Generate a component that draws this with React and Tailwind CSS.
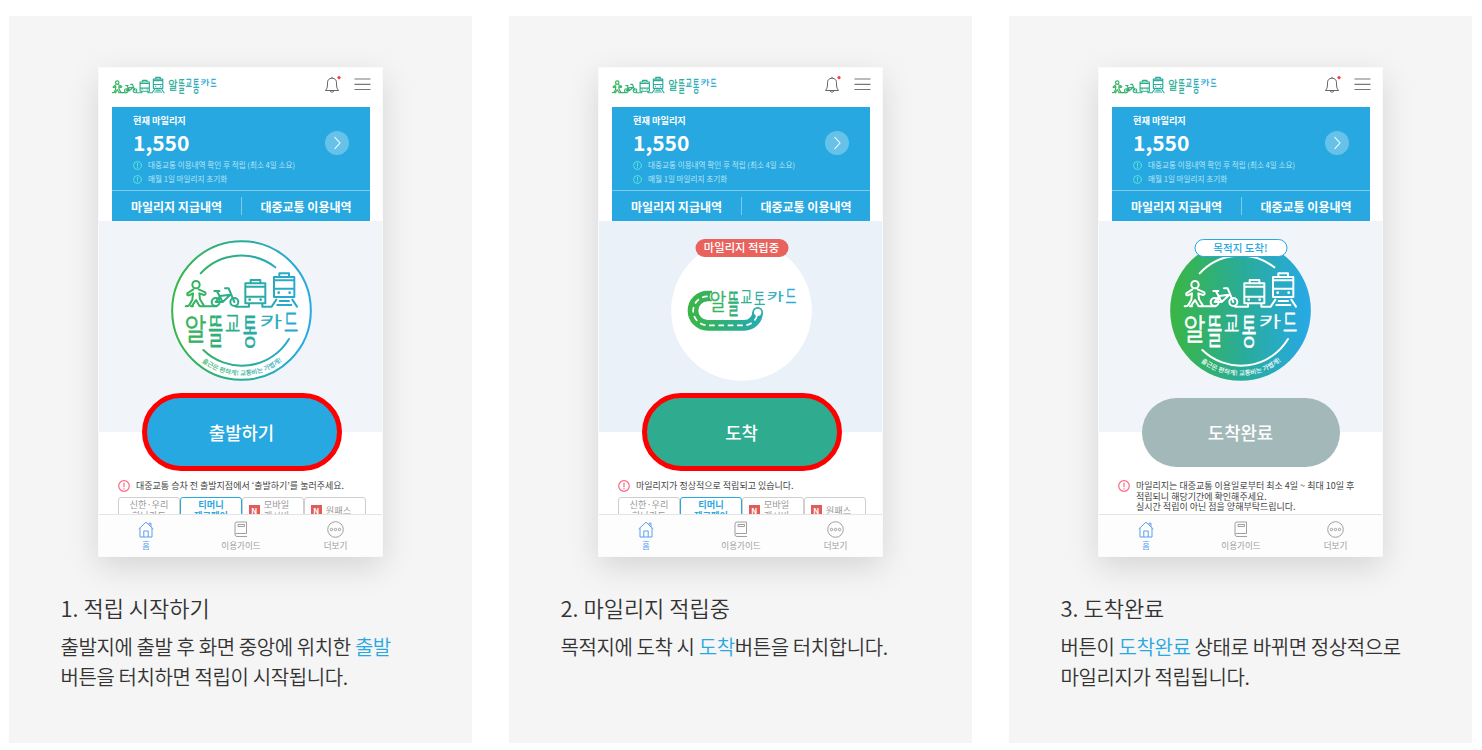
import React from 'react';

const guides = [
  {
    id: 'start',
    title: '1. 적립 시작하기',
    lines: [
      [{ text: '출발지에 출발 후 화면 중앙에 위치한 ' }, { text: '출발', accent: true }],
      [{ text: '버튼을 터치하면 적립이 시작됩니다.' }],
    ],
    stage: 'bg-[#f1f5fa] pl-0.5',
    button: '출발하기',
    buttonClass: 'h-[78px] w-[200px] border-[5px] border-[#ff0000] bg-[#27a8e1]',
    notice: ['대중교통 승차 전 출발지점에서 ‘출발하기’를 눌러주세요.'],
  },
  {
    id: 'progress',
    title: '2. 마일리지 적립중',
    lines: [
      [{ text: '목적지에 도착 시 ' }, { text: '도착', accent: true }, { text: '버튼을 터치합니다.' }],
    ],
    stage: 'bg-[#ebf1f8] pl-0.5',
    badge: '마일리지 적립중',
    badgeClass: 'bg-[#e9635e] text-[11.3px] text-white',
    button: '도착',
    buttonClass: 'h-[78px] w-[200px] border-[5px] border-[#ff0000] bg-[#2fac90]',
    notice: ['마일리지가 정상적으로 적립되고 있습니다.'],
  },
  {
    id: 'done',
    title: '3. 도착완료',
    lines: [
      [{ text: '버튼이 ' }, { text: '도착완료', accent: true }, { text: ' 상태로 바뀌면 정상적으로' }],
      [{ text: '마일리지가 적립됩니다.' }],
    ],
    stage: 'bg-[#f1f5fa]',
    badge: '목적지 도착!',
    badgeClass: 'border border-[#27a8e1] bg-white text-[10.5px] text-[#27a8e1]',
    button: '도착완료',
    buttonClass: 'my-[5px] h-[69px] w-[198px] bg-[#a3b8b8]',
    notice: [
      '마일리지는 대중교통 이용일로부터 최소 4일 ~ 최대 10일 후',
      '적립되니 해당기간에 확인해주세요.',
      '실시간 적립이 아닌 점을 양해부탁드립니다.',
    ],
  },
];

const tabs = [
  { top: '신한·우리', bottom: '하나카드' },
  { top: '티머니', bottom: '제로페이', active: true },
  { top: '모바일', bottom: '캐시비', isNew: true },
  { top: '원패스', isNew: true },
];

// target box of every letter: x, y, width, height
const letters = [
  ['알', 286, 286, 60, 81],
  ['뜰', 357, 283, 41, 100],
  ['교', 407, 277, 42, 64],
  ['통', 460, 283, 40, 100],
  ['카', 512, 284, 61, 42],
  ['드', 584, 274, 39, 68],
];

const Gradient = ({ id, x1 = 243, x2 = 666 }) => (
  <defs>
    <linearGradient id={id} gradientUnits="userSpaceOnUse" x1={x1} y1="0" x2={x2} y2="0">
      <stop offset="0.05" stopColor="#39b54a" />
      <stop offset="0.5" stopColor="#2aac96" />
      <stop offset="0.95" stopColor="#27a9e1" />
    </linearGradient>
  </defs>
);

const Wordmark = ({ color, short, stroke = 3.2 }) => (
  <g fontFamily="'Noto Sans CJK KR', sans-serif" fontSize="100" fontWeight="300" strokeWidth={stroke} strokeLinejoin="round">
    {letters.map(([char, x, y, w, h]) => {
      const cut = short && char === '통';
      const height = cut ? 62 : h;
      return (
        <svg key={char} x={x} y={y} width={w} height={height} viewBox="4 -84 84 92" preserveAspectRatio="none" overflow="visible">
          <text fill={color(x, w)} stroke={color(x, w)}>{cut ? '토' : char}</text>
        </svg>
      );
    })}
  </g>
);

const mix = (a, b, t) => Math.round(a + (b - a) * t);

// solid colour of a letter, taken from the gradient at its centre
const letterColor = (x, w) => {
  const t = Math.min(1, Math.max(0, (x + w / 2 - 265) / 380));
  return t < 0.5
    ? `rgb(${mix(57, 42, t * 2)}, ${mix(181, 172, t * 2)}, ${mix(74, 150, t * 2)})`
    : `rgb(${mix(42, 39, t * 2 - 1)}, ${mix(172, 169, t * 2 - 1)}, ${mix(150, 225, t * 2 - 1)})`;
};

const Vehicles = ({ stroke, width = 6 }) => (
  <g fill="none" stroke={stroke} strokeWidth={width} strokeLinecap="round" strokeLinejoin="round">
    {/* walker */}
    <circle cx="318" cy="194" r="11" />
    <path d="M310 208L292 220Q290 227 297 226L309 220L307 239L298 255Q296 259 287 259M326 208L346 217Q349 224 342 225L328 220L330 238L341 256M307 256L318 240L328 257M303 259H309M330 259H380" />
    {/* bike */}
    <circle cx="377" cy="246" r="12" />
    <circle cx="433" cy="246" r="12" />
    <path d="M373 213H388M381 214L398 246H377L390 228L421 224L398 246M405 205H416L433 246M390 228L377 246M438 260H477V252" />
    {/* bus */}
    <path d="M466 190H526V250H466ZM482 190V180H511V190M466 200H526M466 230H526M517 252V260H545L559 239" />
    {/* train */}
    <path d="M552 171H613V231H552ZM568 171V160H597V171M552 181H613M552 206H613M569 243H597M562 255H604M607 239L621 260" />
    <g fill={stroke} stroke="none">
      <circle cx="479" cy="239" r="4" />
      <circle cx="512" cy="239" r="4" />
      <circle cx="566" cy="218" r="4" />
      <circle cx="599" cy="218" r="4" />
    </g>
  </g>
);

const Emblem = ({ id, filled }) => {
  const line = filled ? '#fff' : `url(#${id})`;
  return (
    <svg width="141" height="141" viewBox="243 60 423 423">
      <Gradient id={id} />
      <circle cx="454.500" cy="271.500" r={filled ? 211 : 208} fill={filled ? `url(#${id})` : '#fff'} stroke={filled ? 'none' : line} strokeWidth="6" />
      <path d="M332 160A165 165 0 0 1 556 142M340 390A165 165 0 0 0 597 357" fill="none" stroke={line} strokeWidth="6" strokeLinecap="round" />
      <Vehicles stroke={line} />
      <Wordmark color={filled ? () => '#fff' : letterColor} />
      <path id={`${id}-slogan`} d="M290 376A195 195 0 0 0 619 376" fill="none" />
      <text fontFamily="'Noto Sans CJK KR', sans-serif" fontSize="19.500" fontWeight="500" fill={line} textAnchor="middle">
        <textPath href={`#${id}-slogan`} startOffset="50.500%">출근은 편하게! 교통비는 가볍게!</textPath>
      </text>
    </svg>
  );
};

const RoadEmblem = () => (
  <svg width="141" height="141" viewBox="243 60 423 423">
    <Gradient id="road" x1={295} x2={617} />
    <circle cx="454.500" cy="271.500" r="211" fill="#fff" />
    <path d="M366 228H353A44 44 0 0 0 353 316H462A40 40 0 0 0 503 277" fill="none" stroke="url(#road)" strokeWidth="32" />
    <circle cx="503" cy="277" r="16" fill="#2aabad" />
    <path d="M353 229A43 43 0 0 0 353 316H462A40 40 0 0 0 502 283" fill="none" stroke="#fff" strokeWidth="5" strokeDasharray="17 11" />
    <ellipse cx="374" cy="230" rx="15" ry="14" fill="#fff" />
    <circle cx="503" cy="277" r="11" fill="#fff" />
    <g transform="translate(142.600 -3.300) scale(.762)">
      <Wordmark color={letterColor} short />
    </g>
  </svg>
);

const HeaderLogo = () => (
  <svg width="105" height="24" viewBox="0 0 315 72">
    <Gradient id="header-logo" x1={200} x2={900} />
    <g transform="translate(-131.500 -70) scale(.463)">
      <Vehicles stroke="url(#header-logo)" width={7.5} />
    </g>
    <g transform="translate(49 -110) scale(.424)">
      <Wordmark color={(x) => (x < 400 ? '#2fae9b' : x < 500 ? '#2babb5' : '#28a9d8')} stroke={4} />
    </g>
  </svg>
);

const InfoIcon = ({ size, color }) => (
  <svg className="shrink-0" width={size} height={size} viewBox="0 0 12 12" fill="none" stroke={color} strokeWidth="1.200" strokeLinecap="round">
    <circle cx="6" cy="6" r="5.300" />
    <path d="M6 3V6.800M6 8.700V8.900" />
  </svg>
);

const PhoneHeader = () => (
  <div className="flex h-10 items-start pl-3.5 pr-3 pt-[9px]">
    <HeaderLogo />
    <svg className="ml-auto" width="18" height="18" viewBox="0 0 18 18" fill="none" stroke="#666" strokeWidth="1" strokeLinejoin="round">
      <path d="M1.500 14.500H14.500Q12.500 12.500 12.500 9V6.800Q12.500 2.500 8 2.200Q3.500 2.500 3.500 6.800V9Q3.500 12.500 1.500 14.500ZM8 2V.8M6 15Q8 17.800 10 15" />
      <circle cx="15" cy="1.600" r="1.600" fill="#ff3b3b" stroke="none" />
    </svg>
    <svg className="ml-3" width="17" height="16" viewBox="0 0 17 16" stroke="#777" strokeWidth="1.200">
      <path d="M.5 3H16.500M.5 8.300H16.500M.5 13.500H16.500" />
    </svg>
  </div>
);

const MileageCard = () => (
  <div className="ml-3.5 mr-[13px] h-[114px] bg-[#27a8e1] text-white">
    <div className="flex h-[84px] items-start border-b border-[#7ccaec] pl-[21px] pr-[21px] pt-[7px]">
      <div className="grow whitespace-nowrap">
        <div className="text-[9.2px] font-bold leading-[13px]">현재 마일리지</div>
        <div className="text-[21px] font-bold leading-[31px]">1,550</div>
        <div className="flex h-[14px] items-center gap-1.5 text-[7.6px] leading-none text-[#b9e3f5]">
          <InfoIcon size={9} color="#5eeadb" />
          대중교통 이용내역 확인 후 적립 (최소 4일 소요)
        </div>
        <div className="flex h-[14px] items-center gap-1.5 text-[7.6px] leading-none text-[#b9e3f5]">
          <InfoIcon size={9} color="#5eeadb" />
          매월 1일 마일리지 초기화
        </div>
      </div>
      <svg className="-ml-6 mt-[17px] shrink-0" width="24" height="24" viewBox="0 0 24 24">
        <circle cx="12" cy="12" r="12" fill="#67c2ea" />
        <path d="M9.500 6L15 12L9.500 18" fill="none" stroke="#fff" strokeWidth="1.100" />
      </svg>
    </div>
    <div className="flex h-[30px] items-center text-[12px] font-bold leading-none">
      <span className="w-[129px] pt-px text-center">마일리지 지급내역</span>
      <span className="h-[18px] w-px bg-[#7ccaec]" />
      <span className="w-[128px] pt-px text-center">대중교통 이용내역</span>
    </div>
  </div>
);

const CardTabs = () => (
  <div className="mt-[5px] flex w-[248px]">
    {tabs.map((tab) => (
      <div
        key={tab.top}
        className={`flex h-8 w-[62px] items-start justify-center gap-1 whitespace-nowrap rounded-t-[3px] border pt-px text-center text-[9.2px] leading-[11px] ${
          tab.isNew ? 'pr-2' : ''
        } ${tab.active ? 'border-[#27a8e1] font-bold text-[#27a8e1]' : 'border-[#cfcfcf] text-[#999]'}`}
      >
        {tab.isNew && (
          <span className="mt-1.5 h-[11px] w-[11px] bg-[#e25b57] text-[8px] font-bold leading-[11px] text-white">N</span>
        )}
        <span className={tab.bottom ? '' : 'mt-1.5'}>
          {tab.top}
          {tab.bottom && <span className="block">{tab.bottom}</span>}
        </span>
      </div>
    ))}
  </div>
);

const PhoneNav = () => (
  <div className="flex h-[42px] border-t border-[#e4e4e4] bg-[#fdfdfd] text-[8.6px] leading-none text-[#a0a0a0]">
    <div className="flex w-[94px] flex-col items-center gap-[3px] pt-1.5 text-[#5a9df0]">
      <svg width="16" height="17" viewBox="0 0 16 17" fill="none" stroke="currentColor" strokeWidth="1">
        <path d="M.7 8L8 1.200L15.300 8M2 7V16H14V7M11 3.800V2.200H13V5.700M5.800 16V10H10.200V16" />
      </svg>
      홈
    </div>
    <div className="flex w-24 flex-col items-center gap-[3px] pt-1.5">
      <svg width="14" height="17" viewBox="0 0 14 17" fill="none" stroke="currentColor" strokeWidth="1">
        <path d="M12.500 12.500V1H3Q1 1 1 3V13.500Q1 15.500 3 15.500H13M1.500 12.500H12.500M4 3.500H10.500V5.500H4Z" />
      </svg>
      이용가이드
    </div>
    <div className="flex w-[93px] flex-col items-center gap-[3px] pt-1.5">
      <svg width="17" height="17" viewBox="0 0 17 17" fill="none" stroke="currentColor" strokeWidth="1">
        <circle cx="8.500" cy="8.500" r="7.800" />
        <circle cx="4.500" cy="8.500" r="1.200" />
        <circle cx="8.500" cy="8.500" r="1.200" />
        <circle cx="12.500" cy="8.500" r="1.200" />
      </svg>
      더보기
    </div>
  </div>
);

const Phone = ({ guide }) => (
  <div className="flex h-[490px] w-[285px] flex-col border border-[#fafafa] bg-white shadow-[0_10px_30px_rgba(0,0,0,0.13)]">
    <div className="-mt-px h-[447px] shrink-0 overflow-hidden">
      <div className="-mx-px">
        <PhoneHeader />
        <MileageCard />
      </div>
      <div className={`flex h-[211px] flex-col items-center pt-[19px] ${guide.stage}`}>
        <div className="relative h-[141px] shrink-0">
          {guide.id === 'progress' ? <RoadEmblem /> : <Emblem id={`emblem-${guide.id}`} filled={guide.id === 'done'} />}
          {guide.badge && (
            <span className={`absolute -top-px left-1/2 flex h-[18px] w-[93px] -translate-x-1/2 items-center justify-center whitespace-nowrap rounded-full font-medium leading-none ${guide.badgeClass}`}>
              {guide.badge}
            </span>
          )}
        </div>
        <div className="mt-3 shrink-0">
          <div className={`flex items-center justify-center rounded-full text-[17.8px] font-medium text-white ${guide.buttonClass}`}>
            {guide.button}
          </div>
        </div>
      </div>
      <div className="pl-[19px] pt-12">
        <div className="flex items-start gap-1.5">
          <InfoIcon size={12} color="#fb6a80" />
          <div className="whitespace-nowrap pt-px text-[9px] leading-[10.600px] text-[#444]">
            {guide.notice.map((line) => (
              <p key={line}>{line}</p>
            ))}
          </div>
        </div>
        {guide.id !== 'done' && <CardTabs />}
      </div>
    </div>
    <PhoneNav />
  </div>
);

const App = () => (
  <div className="flex h-[750px] gap-[37px] overflow-hidden bg-white pl-[9px] pt-4 font-['Noto_Sans_CJK_KR',sans-serif]">
    {guides.map((guide) => (
      <section key={guide.id} className="flex h-[727px] w-[463px] shrink-0 flex-col bg-[#f5f5f5] pt-[51px]">
        <div className="flex justify-center">
          <Phone guide={guide} />
        </div>
        <div className="whitespace-nowrap pl-[51.5px] pt-[33px] font-[350] text-[#333]">
          <h2 className="text-[22px] leading-[34px]">{guide.title}</h2>
          <div className="mt-2 text-[20px] leading-[30px] tracking-[-0.4px]">
            {guide.lines.map((line, i) => (
              <p key={i}>
                {line.map((part) => (
                  <span key={part.text} className={part.accent ? 'text-[#27a8e1]' : ''}>{part.text}</span>
                ))}
              </p>
            ))}
          </div>
        </div>
      </section>
    ))}
  </div>
);

export default App;
